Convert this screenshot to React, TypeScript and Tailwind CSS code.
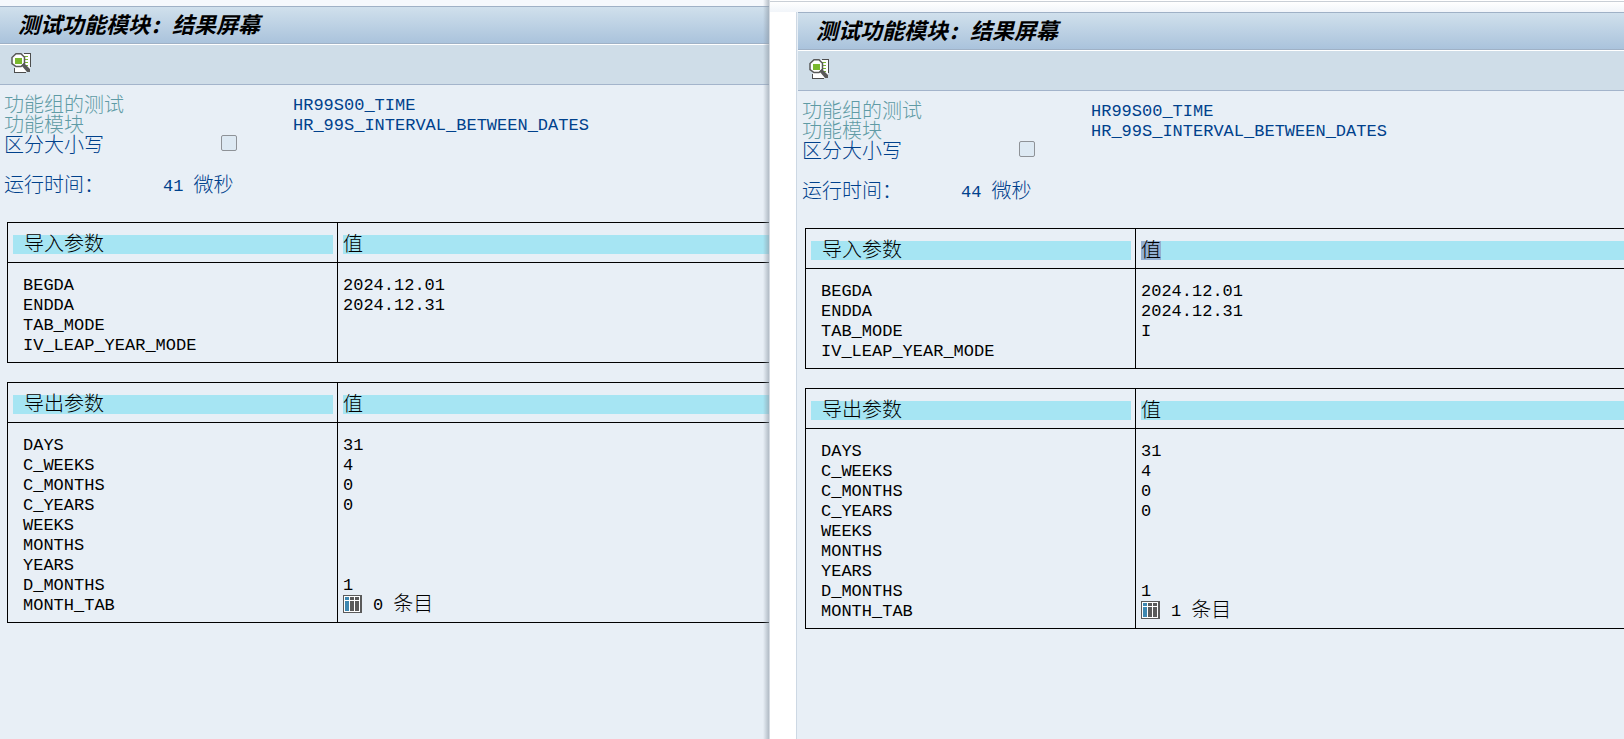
import { useId } from "react";

type Row = { name: string; value?: string; entries?: number };

const importRows = (tabMode: string): Row[] => [
  { name: "BEGDA", value: "2024.12.01" },
  { name: "ENDDA", value: "2024.12.31" },
  { name: "TAB_MODE", value: tabMode },
  { name: "IV_LEAP_YEAR_MODE" },
];

const exportRows = (entries: number): Row[] => [
  { name: "DAYS", value: "31" },
  { name: "C_WEEKS", value: "4" },
  { name: "C_MONTHS", value: "0" },
  { name: "C_YEARS", value: "0" },
  { name: "WEEKS" },
  { name: "MONTHS" },
  { name: "YEARS" },
  { name: "D_MONTHS", value: "1" },
  { name: "MONTH_TAB", entries },
];

function DisplayIcon() {
  return (
    <svg viewBox="0 0 20 20" className="h-5 w-5" aria-hidden="true">
      <path d="M4 1h15v18H4z" fill="#fff" />
      <path d="M13 .5h6v13M3.500 15v4h11" fill="none" stroke="#4d4d4d" shapeRendering="crispEdges" />
      <path d="M13 3h4v1h-4zM14 6h3v1h-3zM14 9h3v1h-3zM13 12h4v1h-4z" fill="#7ab82e" shapeRendering="crispEdges" />
      <path
        d="M5 .8h5l3.500 3.500v6L10 13.500H5L1 10.500v-6z"
        fill="#fff"
        stroke="#595959"
        strokeWidth="1.500"
      />
      <path d="M4 5h7v6H4z" fill="#7ab82e" shapeRendering="crispEdges" />
      <path d="M10.500 12.500l2.500-2.500 6 6v3h-3z" fill="#595959" />
    </svg>
  );
}

function TableIcon() {
  return (
    <svg viewBox="0 0 19 18" className="h-[18px] w-[19px]" shapeRendering="crispEdges" aria-hidden="true">
      <path d="M0 0h19v18H0z" fill="#5a5a5a" />
      <path d="M1 1h16v16H1z" fill="#fff" />
      <path d="M2 2h4v3H2zM2 6h4v10H2z" fill="#3d87b0" />
      <path d="M7 2h4v3H7zM7 6h4v10H7zM12 2h4v3h-4zM12 6h4v10h-4z" fill="#5a5a5a" />
    </svg>
  );
}

function ParameterTable({ title, rows, selected }: { title: string; rows: Row[]; selected?: boolean }) {
  return (
    <table className="ml-[7px] w-full table-fixed border-separate border-spacing-0 border border-r-0 border-black text-left text-black">
      <colgroup>
        <col className="w-[330px]" />
        <col />
      </colgroup>
      <thead className="text-[20px] leading-[22px]">
        <tr>
          <th className="border-r border-b border-black py-0 pr-1 pl-[5px] font-light">
            <div className="mt-3 mb-2 h-[19px] bg-[#a6e5f3] pl-[11px]">{title}</div>
          </th>
          <th className="border-b border-black py-0 pr-0 pl-[5px] font-light">
            <div className="mt-3 mb-2 flex h-[19px] bg-[#a6e5f3]">
              <span className={selected ? "h-[19px] bg-[#93afd1]" : "h-[19px]"}>值</span>
            </div>
          </th>
        </tr>
      </thead>
      <tbody className="leading-[22px] [&>tr:first-child>td]:pt-3 [&>tr:last-child>td]:pb-[7px]">
        {rows.map((row) => (
          <tr key={row.name}>
            <td className="border-r border-black py-0 pr-0 pl-[15px]">
              <div className="h-5">{row.name}</div>
            </td>
            <td className="py-0 pr-0 pl-[5px]">
              <div className="flex h-5">
                {row.entries === undefined ? (
                  row.value
                ) : (
                  <>
                    <TableIcon />
                    <span className="ml-[11px]">{row.entries}</span>
                    <span className="ml-[10px] text-[20px]">条目</span>
                  </>
                )}
              </div>
            </td>
          </tr>
        ))}
      </tbody>
    </table>
  );
}

function ResultScreen(props: { runtime: number; tabMode: string; entries: number; selected?: boolean }) {
  const caseId = useId();
  return (
    <section className="overflow-hidden">
      <h1 className="h-[38px] border-t border-b border-[#9fb1c6] bg-linear-to-b from-[#d0e0ec] to-[#aac3dc] pl-[18px] font-['Noto_Sans_CJK_SC',sans-serif] text-[22px] leading-8 font-bold text-black italic [font-feature-settings:'hwid']">
        测试功能模块: 结果屏幕
      </h1>
      <div className="flex h-[41px] items-center border-t border-b border-t-white border-b-[#a3b4cb] bg-[#cfdde8] pl-[11px]">
        <button type="button" aria-label="显示" className="mb-1 block h-5 w-5">
          <DisplayIcon />
        </button>
      </div>
      <div className="pt-[10px] leading-6 text-[#00418c]">
        <dl className="grid grid-cols-[289px_1fr] pl-1">
          <dt className="h-5 text-[20px] text-[#5f9ba5]">功能组的测试</dt>
          <dd className="h-5 leading-[22px]">HR99S00_TIME</dd>
          <dt className="h-5 text-[20px] text-[#5f9ba5]">功能模块</dt>
          <dd className="h-5 leading-[22px]">HR_99S_INTERVAL_BETWEEN_DATES</dd>
        </dl>
        <div className="flex h-5 pl-1">
          <label htmlFor={caseId} className="w-[217px] text-[20px]">
            区分大小写
          </label>
          <input
            id={caseId}
            type="checkbox"
            className="h-4 w-4 appearance-none rounded-[2px] border border-[#8e9297] bg-[#dde9f3]"
          />
        </div>
        <div className="mt-5 flex h-5 pl-1">
          <span className="w-[159px] text-[20px]">运行时间：</span>
          <span>{props.runtime}</span>
          <span className="ml-[10px] text-[20px]">微秒</span>
        </div>
        <div className="mt-[27px] flex flex-col gap-[19px]">
          <ParameterTable title="导入参数" rows={importRows(props.tabMode)} selected={props.selected} />
          <ParameterTable title="导出参数" rows={exportRows(props.entries)} />
        </div>
      </div>
    </section>
  );
}

export default function App() {
  return (
    <main
      lang="zh-CN"
      className="grid min-h-screen grid-cols-[769fr_855fr] bg-white font-['Liberation_Mono','Noto_Sans_CJK_SC',monospace] text-[17px] font-light"
    >
      <div className="relative overflow-hidden bg-[#e8eff6]">
        <div className="h-[6px] bg-[#f5f8fc]" />
        <ResultScreen runtime={41} tabMode="" entries={0} />
        <div className="absolute inset-y-0 right-0 w-[6px] bg-linear-to-r from-transparent to-[#8d99a5]/60" />
      </div>
      <div className="flex flex-col overflow-hidden border-l border-[#d5dbe2] bg-white">
        <div className="mt-px h-[11px] border-t border-[#c9cfd6] bg-linear-to-b from-white to-[#f1f5fa]" />
        <div className="ml-[26px] flex-1 border-l border-[#cdd8e4] bg-[#e8eff6] pl-px">
          <ResultScreen runtime={44} tabMode="I" entries={1} selected />
        </div>
      </div>
    </main>
  );
}
